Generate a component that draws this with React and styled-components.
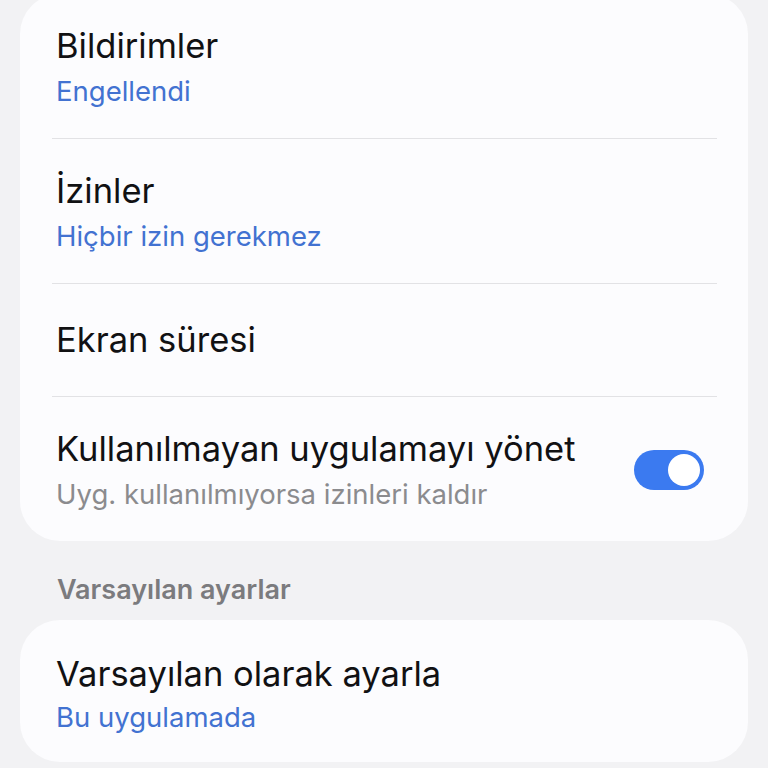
import React from 'react'
import styled, { createGlobalStyle } from 'styled-components'

const Global = createGlobalStyle`
  body {
    margin: 0;
    background: #f2f2f4;
    font-family: Inter, "Noto Sans", sans-serif;
    -webkit-font-smoothing: antialiased;
  }
`

const Page = styled.div`
  width: 768px;
  height: 768px;
  overflow: hidden;
  box-sizing: border-box;
  padding: 0 20px;
`

const Card = styled.div`
  background: #fcfcfe;
  border-radius: 40px;
  margin-top: ${(p) => p.$offset || 0}px;
`

const paddings = {
  single: '36px 44px 36px 36px',
  double: '32px 44px 30px 36px',
  lone: '34px 44px 28px 36px',
}

const Row = styled.div`
  display: flex;
  align-items: center;
  padding: ${(p) => paddings[p.$kind] || paddings.double};
`

const Divider = styled.div`
  height: 1px;
  margin: 0 31px 0 32px;
  background: #e2e2e5;
`

const Text = styled.div`
  flex: 1;
  display: flex;
  flex-direction: column;
  gap: ${(p) => p.$gap || 8}px;
`

const Title = styled.div`
  font-size: 34.5px;
  line-height: 40px;
  color: #111113;
`

const Sub = styled.div`
  font-size: 27.5px;
  line-height: 34px;
  color: ${(p) => (p.$muted ? '#8b8b8e' : '#4272d1')};
`

const Header = styled.div`
  font-size: 27px;
  line-height: 32px;
  font-weight: 600;
  color: #7b7b7e;
  padding: 0 37px;
  margin: 33px 0 14px;
`

const Track = styled.div`
  width: 70px;
  height: 40px;
  border-radius: 20px;
  background: #3b7af0;
  display: flex;
  align-items: center;
  justify-content: flex-end;
  padding: 0 4px;
  box-sizing: border-box;
  flex-shrink: 0;
`

const Knob = styled.div`
  width: 32px;
  height: 32px;
  border-radius: 50%;
  background: #ffffff;
`

function Item({ title, sub, muted, kind, gap, children }) {
  return (
    <Row $kind={kind || (sub ? 'double' : 'single')}>
      <Text $gap={gap}>
        <Title>{title}</Title>
        {sub && <Sub $muted={muted}>{sub}</Sub>}
      </Text>
      {children}
    </Row>
  )
}

export default function App() {
  return (
    <>
      <Global />
      <Page>
        <Card $offset={-6}>
          <Item title="Bildirimler" sub="Engellendi" />
          <Divider />
          <Item title="İzinler" sub="Hiçbir izin gerekmez" />
          <Divider />
          <Item title="Ekran süresi" />
          <Divider />
          <Item
            title="Kullanılmayan uygulamayı yönet"
            sub="Uyg. kullanılmıyorsa izinleri kaldır"
            muted
          >
            <Track>
              <Knob />
            </Track>
          </Item>
        </Card>
        <Header>Varsayılan ayarlar</Header>
        <Card>
          <Item
            title="Varsayılan olarak ayarla"
            sub="Bu uygulamada"
            kind="lone"
            gap={6}
          />
        </Card>
      </Page>
    </>
  )
}
